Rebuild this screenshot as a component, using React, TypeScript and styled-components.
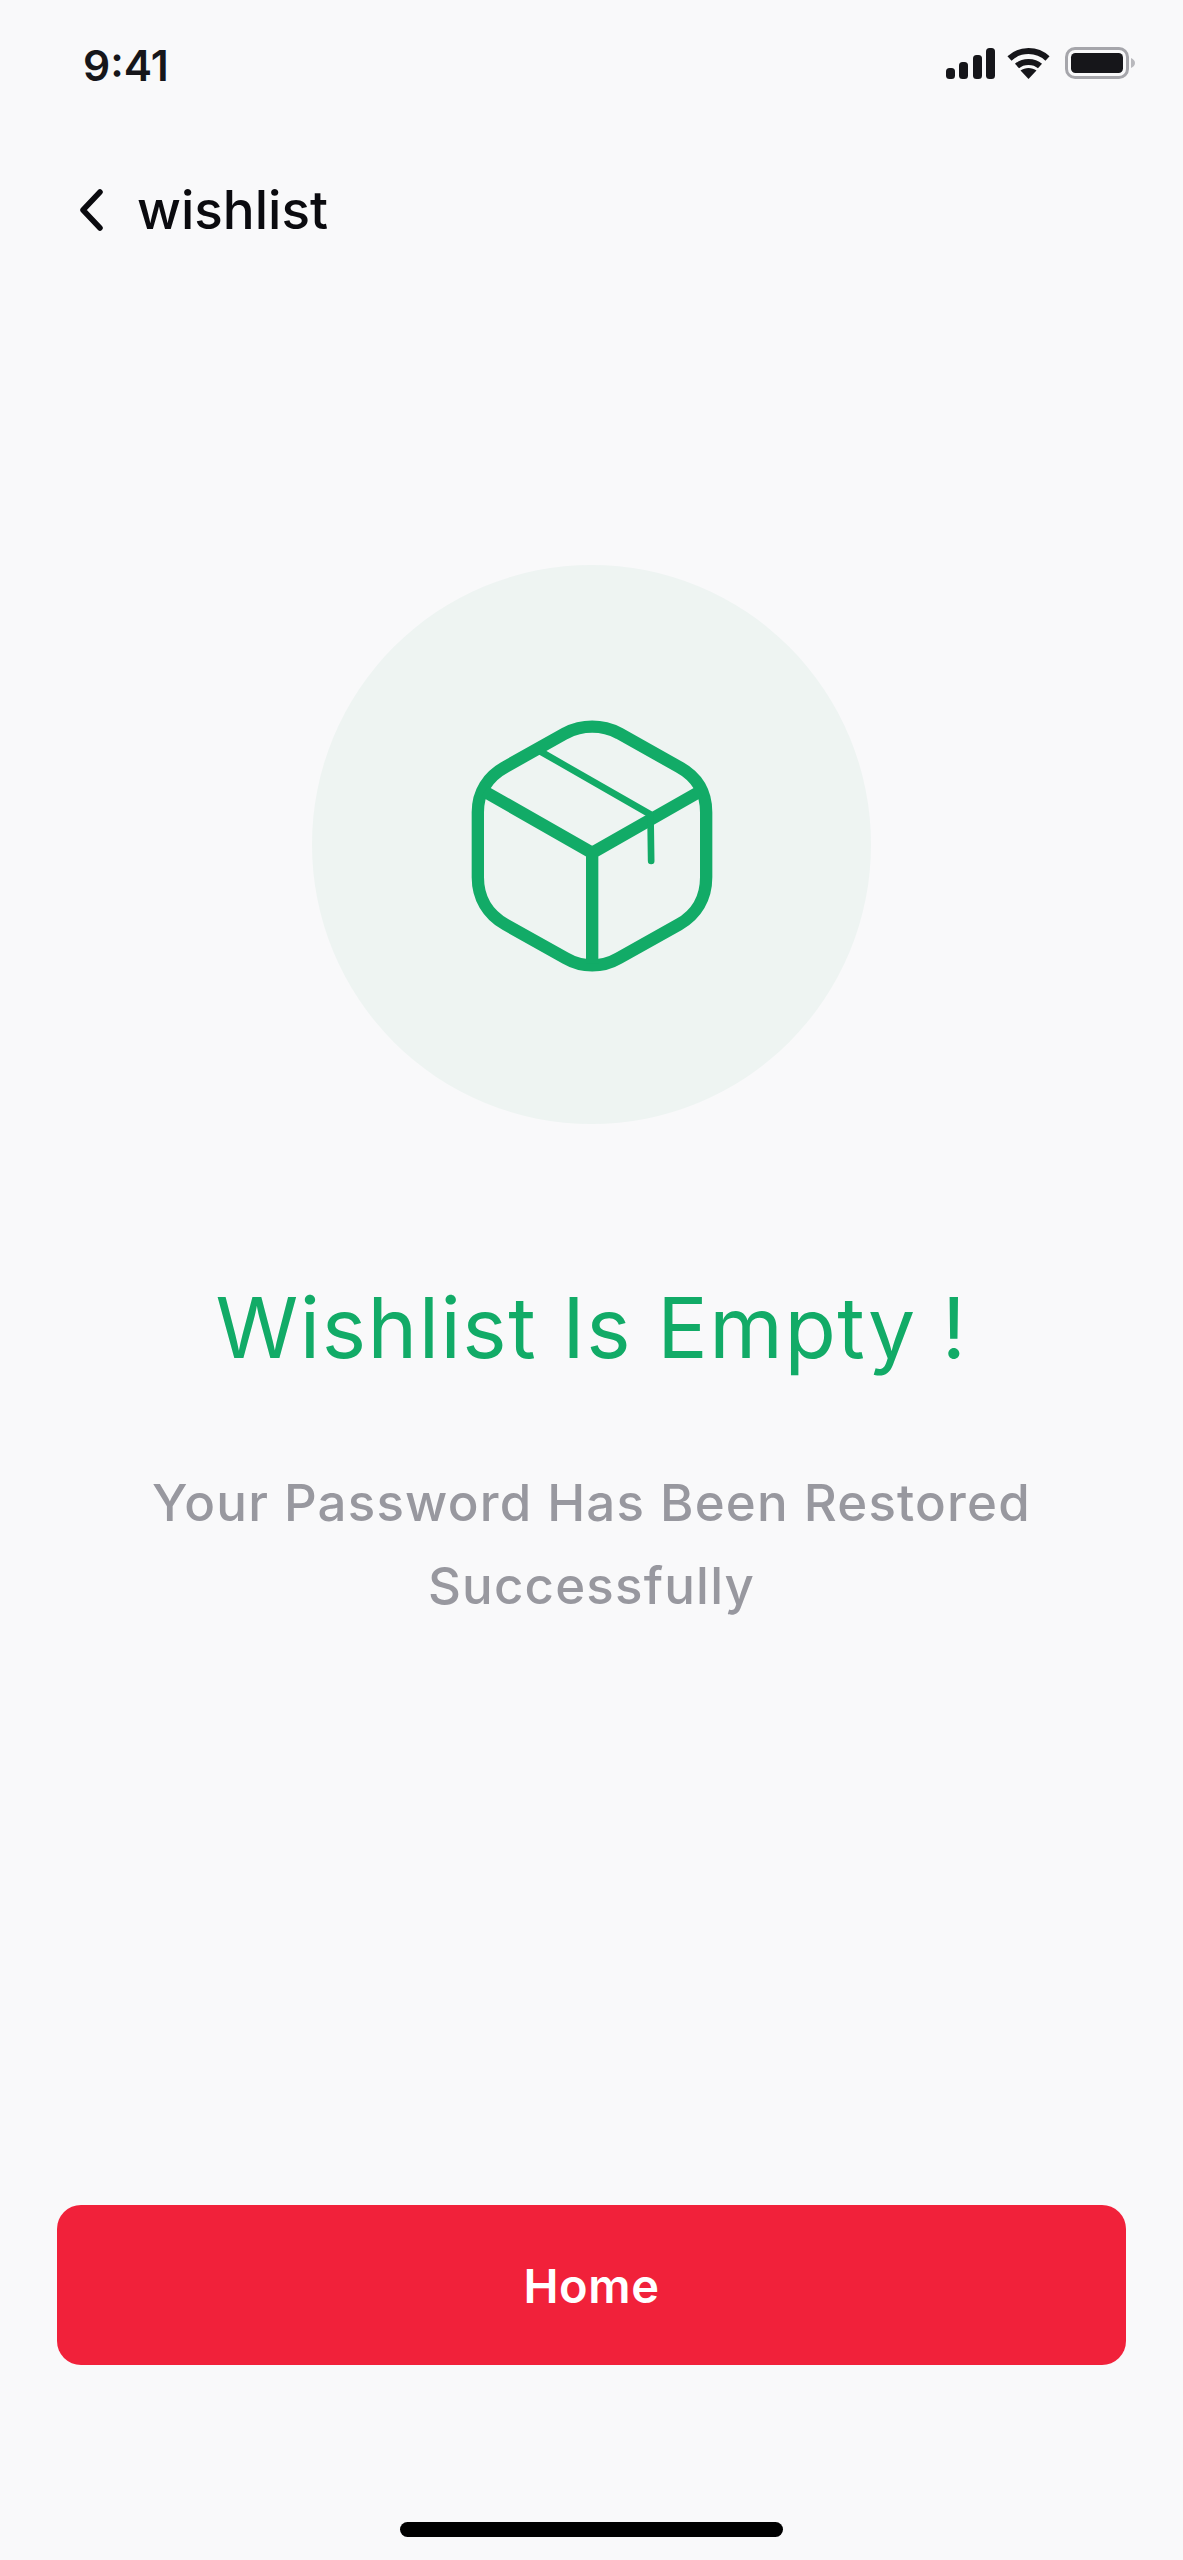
import React from "react";
import styled, { createGlobalStyle } from "styled-components";

const GlobalStyle = createGlobalStyle`
    html, body {
        margin: 0;
        padding: 0;
        background-color: #F9F9FA;
    }
    * {
        box-sizing: border-box;
    }
`;

const Screen = styled.div`
    width: 1183px;
    height: 2560px;

    display: flex;
    flex-direction: column;
    align-items: center;

    background-color: #F9F9FA;
    font-family: "Inter", "Liberation Sans", sans-serif;
`;

const StatusBar = styled.div`
    width: 100%;
    height: 170px;
    padding: 42px 48px 0 83px;

    display: flex;
    justify-content: space-between;
    align-items: flex-start;
`;

const Clock = styled.span`
    font-size: 42.5px;
    font-weight: 600;
    line-height: 48px;
    color: #16161A;
`;

const StatusIcons = styled.div`
    display: flex;
    align-items: center;
    gap: 12px;
    margin-top: 5px;
`;

const NavBar = styled.div`
    width: 100%;
    height: 80px;
    padding-left: 79px;

    display: flex;
    align-items: center;
    gap: 34px;
`;

const NavTitle = styled.span`
    font-size: 53px;
    font-weight: 500;
    line-height: 80px;
    color: #0B0B0F;
`;

const Circle = styled.div`
    width: 559px;
    height: 559px;
    margin-top: 315px;
    border-radius: 50%;

    display: flex;
    justify-content: center;
    align-items: center;

    background-color: #EEF4F2;
`;

const Title = styled.h1`
    margin: 149px 0 0;

    font-size: 84px;
    font-weight: 400;
    line-height: 110px;
    letter-spacing: 1.5px;
    text-align: center;
    color: #12AB67;
`;

const Subtitle = styled.p`
    width: 1000px;
    margin: 78px 0 0;

    font-size: 51px;
    font-weight: 500;
    line-height: 83px;
    letter-spacing: 1.2px;
    text-align: center;
    color: #98989F;
`;

const Spacer = styled.div`
    flex: 1;
`;

const HomeButton = styled.button`
    width: 1069px;
    height: 160px;
    border: none;
    border-radius: 24px;

    display: flex;
    justify-content: center;
    align-items: center;

    font-family: inherit;
    font-size: 47px;
    font-weight: 600;
    letter-spacing: 0.6px;
    color: #FFFFFF;
    background-color: #F1213A;
`;

const HomeIndicator = styled.div`
    width: 383px;
    height: 15px;
    margin-top: 157px;
    margin-bottom: 23px;
    border-radius: 8px;

    background-color: #000000;
`;

function SignalIcon() {
    return (
        <svg width="49" height="31" viewBox="0 0 49 31" fill="#16161A">
            <rect x="0" y="20" width="9" height="11" rx="3.5" />
            <rect x="13" y="14" width="9" height="17" rx="3.5" />
            <rect x="27" y="7" width="9" height="24" rx="3.5" />
            <rect x="40" y="0" width="9" height="31" rx="3.5" />
        </svg>
    );
}

function WifiIcon() {
    return (
        <svg width="46" height="31" viewBox="0 0 46 31" fill="none" stroke="#16161A" strokeWidth="6">
            <path d="M2.5 10.5 C13 0.5 30 0.5 40.5 10.5" />
            <path d="M10 18 C16 12.5 27 12.5 33 18" />
            <path d="M13.5 22.5 L21.5 31 L29.5 22.5 C25 19 18 19 13.5 22.5 Z" fill="#16161A" stroke="none" />
        </svg>
    );
}

function BatteryIcon() {
    return (
        <svg width="70" height="32" viewBox="0 0 70 32" fill="none">
            <rect x="1.5" y="1.5" width="61" height="29" rx="8.5" stroke="#A6A6AB" strokeWidth="3" />
            <rect x="6" y="6" width="52" height="20" rx="4.5" fill="#16161A" />
            <path d="M66 11 C68.5 12 70 14 70 16 C70 18 68.5 20 66 21 Z" fill="#B9B9BD" />
        </svg>
    );
}

function BackIcon() {
    return (
        <svg width="24" height="42" viewBox="0 0 24 42" fill="none" stroke="#0B0B0F" strokeWidth="5.5" strokeLinecap="round" strokeLinejoin="round">
            <path d="M21 3 L4 21 L21 39" />
        </svg>
    );
}

function BoxIcon() {
    return (
        <svg width="300" height="300" viewBox="4.5 13.5 900 900" fill="none" stroke="#12AB67" strokeLinecap="round" strokeLinejoin="round">
            <path
                strokeWidth="37"
                d="M375 128 L195 229 C142 258 112 305 112 365 L112 560 C112 622 142 672 195 702 L375 803 C425 832 485 832 535 803 L715 702 C768 672 797 622 797 560 L797 365 C797 305 768 258 715 229 L535 128 C485 102 425 102 375 128 Z"
            />
            <path strokeWidth="37" strokeLinecap="butt" d="M132 303 L455 487 L778 303 M455 487 L455 820" />
            <path strokeWidth="20" d="M300 183 L630 372 L632 511" />
        </svg>
    );
}

export default function App() {
    return (
        <Screen>
            <GlobalStyle />
            <StatusBar>
                <Clock>9:41</Clock>
                <StatusIcons>
                    <SignalIcon />
                    <WifiIcon />
                    <BatteryIcon />
                </StatusIcons>
            </StatusBar>
            <NavBar>
                <BackIcon />
                <NavTitle>wishlist</NavTitle>
            </NavBar>
            <Circle>
                <BoxIcon />
            </Circle>
            <Title>Wishlist Is Empty !</Title>
            <Subtitle>Your Password Has Been Restored Successfully</Subtitle>
            <Spacer />
            <HomeButton>Home</HomeButton>
            <HomeIndicator />
        </Screen>
    );
}
